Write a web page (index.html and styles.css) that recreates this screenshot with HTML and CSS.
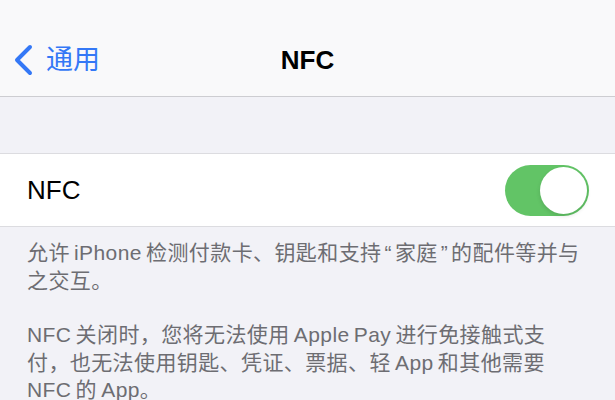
FILE: index.html
```html
<!DOCTYPE html>
<html lang="zh-CN">
<head>
<meta charset="utf-8">
<title>NFC</title>
<link rel="stylesheet" href="styles.css">
</head>
<body>
<header class="nav">
  <div class="nav-row">
    <a class="back" href="#">
      <svg class="chevron" width="22" height="32" viewBox="0 0 22 32" aria-hidden="true">
        <path d="M18 3 L5 16 L18 29" fill="none" stroke="currentColor" stroke-width="4" stroke-linecap="round" stroke-linejoin="round"/>
      </svg>
      <span class="back-label">通用</span>
    </a>
    <h1 class="title">NFC</h1>
  </div>
</header>
<main class="content">
  <section class="group">
    <div class="cell">
      <span class="cell-label">NFC</span>
      <span class="switch on" role="switch" aria-checked="true"><span class="knob"></span></span>
    </div>
  </section>
  <div class="footer">
    <p>允许 iPhone 检测付款卡、钥匙和支持<span class="q">“</span>家庭<span class="q">”</span>的配件等并与<br>之交互。</p>
    <p>NFC 关闭时，您将无法使用 Apple Pay 进行免接触式支<br>付，也无法使用钥匙、凭证、票据、轻 App 和其他需要<br>NFC 的 App。</p>
  </div>
</main>
</body>
</html>
```
FILE: styles.css
```css
html, body {
  margin: 0;
  padding: 0;
}
body {
  background: #f2f2f7;
  font-family: "Liberation Sans", "Noto Sans CJK SC", sans-serif;
  width: 615px;
  height: 400px;
  overflow: hidden;
}
.nav {
  background: #f9f9fa;
  padding-top: 24px;
  border-bottom: 1px solid #cdcdd1;
}
.nav-row {
  position: relative;
  height: 72px;
  display: flex;
  align-items: center;
  justify-content: center;
}
.back {
  position: absolute;
  left: 12px;
  top: 0;
  height: 72px;
  display: flex;
  align-items: center;
  gap: 12px;
  color: #3478f6;
  text-decoration: none;
}
.chevron {
  display: block;
  margin-top: -1px;
}
.back-label {
  font-size: 27px;
  line-height: 1;
  margin-top: 1px;
}
.title {
  margin: 0;
  font-size: 26px;
  font-weight: bold;
  color: #000;
  line-height: 1;
}
.content {
  padding-top: 56px;
}
.group {
  background: #fff;
  border-top: 1px solid #dcdce0;
  border-bottom: 1px solid #dcdce0;
}
.cell {
  height: 72px;
  display: flex;
  align-items: center;
  justify-content: space-between;
  padding: 0 26px 0 27px;
}
.cell-label {
  font-size: 26px;
  color: #000;
}
.switch {
  width: 84px;
  height: 51px;
  border-radius: 26px;
  background: #62c466;
  position: relative;
  display: block;
}
.knob {
  position: absolute;
  top: 2px;
  right: 2px;
  width: 47px;
  height: 47px;
  border-radius: 50%;
  background: #fff;
  box-shadow: 0 2px 4px rgba(0,0,0,0.12);
}
.footer {
  padding: 12px 4px 0 27px;
  color: #6d6d72;
  font-size: 21px;
  line-height: 27.5px;
  letter-spacing: 0.4px;
  word-spacing: -2px;
  white-space: nowrap;
}
.footer p {
  margin: 0 0 27px;
}
.q {
  margin: 0 3px;
}
```
